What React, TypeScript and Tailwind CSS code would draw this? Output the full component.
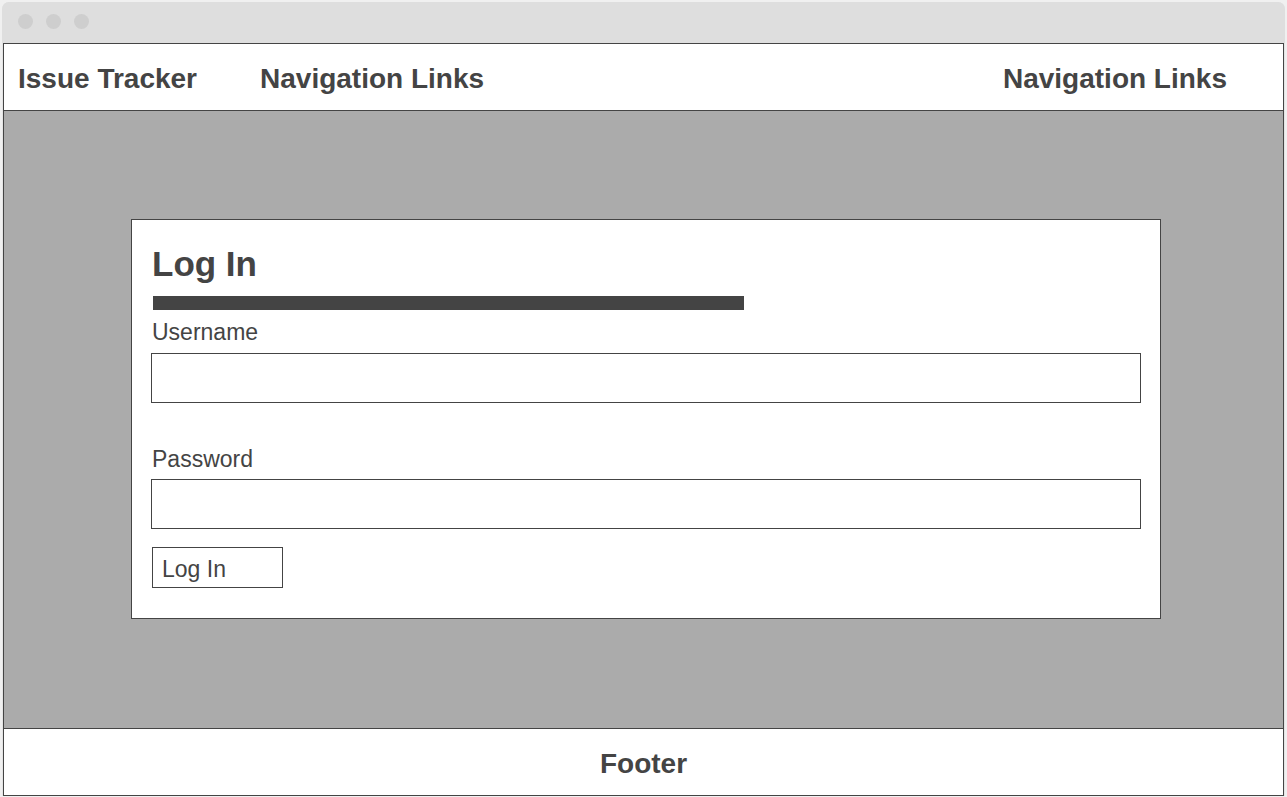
import React from "react";

export default function App() {
  return (
    <div
      className="h-[797px] w-[1287px] bg-[#f0f0f0] px-[2px] pt-[2px] pb-[1px] text-[#444444]"
      style={{ fontFamily: '"Liberation Sans", Arial, sans-serif' }}
    >
      <div className="flex h-full flex-col rounded-t-[7px] bg-[#e4e4e4]">
        {/* title bar */}
        <div className="flex h-[41px] items-center gap-[13px] rounded-t-[7px] bg-[#dedede] pl-[16px] pb-[3px]">
          <span className="h-[15px] w-[15px] rounded-full bg-[#cecece]" />
          <span className="h-[15px] w-[15px] rounded-full bg-[#cecece]" />
          <span className="h-[15px] w-[15px] rounded-full bg-[#cecece]" />
        </div>
        <div className="flex flex-1 flex-col px-[1px]">
          {/* header */}
          <header className="flex h-[68px] items-center border border-[#444444] bg-white pt-[4px] text-[28px] font-bold leading-none">
            <span className="ml-[14px]">Issue Tracker</span>
            <span className="ml-[63px]">Navigation Links</span>
            <span className="ml-auto mr-[56px]">Navigation Links</span>
          </header>
          {/* main */}
          <main className="flex flex-1 items-center border-x border-[#444444] bg-[#ababab] pb-[2px] pl-[127px]">
            <div className="flex h-[400px] w-[1030px] flex-col border border-[#444444] bg-white pl-[19px] pt-[26px]">
              <h1 className="ml-[1px] text-[35px] font-bold leading-none">Log In</h1>
              <div className="ml-[2px] mt-[15px] h-[14px] w-[591px] bg-[#444444]" />
              <label className="ml-[1px] mt-[11px] text-[23px] leading-none">Username</label>
              <div className="mt-[9px] h-[50px] w-[990px] border border-[#444444]" />
              <label className="ml-[1px] mt-[45px] text-[23px] leading-none">Password</label>
              <div className="mt-[8px] h-[50px] w-[990px] border border-[#444444]" />
              <button className="ml-[1px] mt-[18px] flex h-[41px] w-[131px] items-center border border-[#444444] bg-white pl-[9px] pt-[4px] text-left text-[23px] leading-none">
                Log In
              </button>
            </div>
          </main>
          {/* footer */}
          <footer className="flex h-[68px] items-center justify-center border border-[#444444] bg-white pt-[4px] text-[28px] font-bold leading-none">
            Footer
          </footer>
        </div>
      </div>
    </div>
  );
}
